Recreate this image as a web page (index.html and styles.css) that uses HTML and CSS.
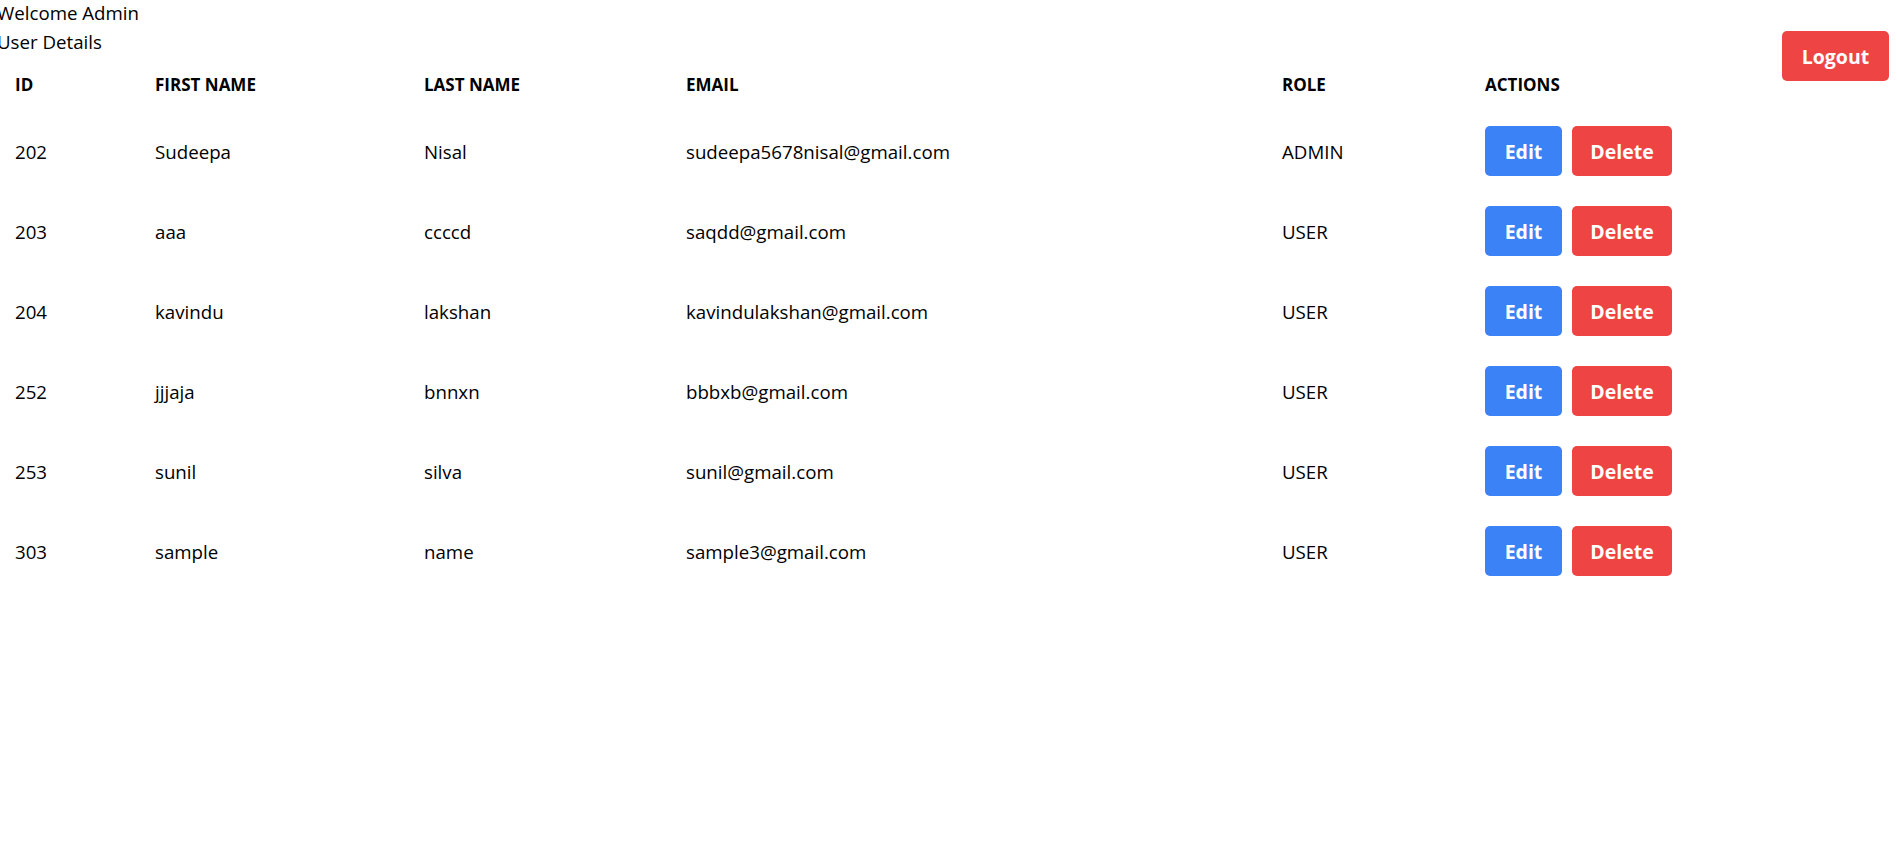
FILE: index.html
```html
<!DOCTYPE html>
<html lang="en">
<head>
<meta charset="utf-8">
<title>User Details</title>
<link rel="stylesheet" href="styles.css">
</head>
<body>
<div class="page">
  <main class="main">
    <div class="welcome">Welcome Admin</div>
    <div class="subtitle">User Details</div>
    <table class="users">
      <thead>
        <tr>
          <th class="c-id">ID</th>
          <th class="c-first">FIRST NAME</th>
          <th class="c-last">LAST NAME</th>
          <th class="c-email">EMAIL</th>
          <th class="c-role">ROLE</th>
          <th class="c-actions">ACTIONS</th>
        </tr>
      </thead>
      <tbody>
        <tr>
          <td>202</td><td>Sudeepa</td><td>Nisal</td><td>sudeepa5678nisal@gmail.com</td><td>ADMIN</td>
          <td><div class="actions"><button class="btn btn-edit">Edit</button><button class="btn btn-delete">Delete</button></div></td>
        </tr>
        <tr>
          <td>203</td><td>aaa</td><td>ccccd</td><td>saqdd@gmail.com</td><td>USER</td>
          <td><div class="actions"><button class="btn btn-edit">Edit</button><button class="btn btn-delete">Delete</button></div></td>
        </tr>
        <tr>
          <td>204</td><td>kavindu</td><td>lakshan</td><td>kavindulakshan@gmail.com</td><td>USER</td>
          <td><div class="actions"><button class="btn btn-edit">Edit</button><button class="btn btn-delete">Delete</button></div></td>
        </tr>
        <tr>
          <td>252</td><td>jjjaja</td><td>bnnxn</td><td>bbbxb@gmail.com</td><td>USER</td>
          <td><div class="actions"><button class="btn btn-edit">Edit</button><button class="btn btn-delete">Delete</button></div></td>
        </tr>
        <tr>
          <td>253</td><td>sunil</td><td>silva</td><td>sunil@gmail.com</td><td>USER</td>
          <td><div class="actions"><button class="btn btn-edit">Edit</button><button class="btn btn-delete">Delete</button></div></td>
        </tr>
        <tr>
          <td>303</td><td>sample</td><td>name</td><td>sample3@gmail.com</td><td>USER</td>
          <td><div class="actions"><button class="btn btn-edit">Edit</button><button class="btn btn-delete">Delete</button></div></td>
        </tr>
      </tbody>
    </table>
  </main>
  <button class="btn btn-logout">Logout</button>
</div>
</body>
</html>
```
FILE: styles.css
```css
html, body {
  margin: 0;
  padding: 0;
  background: #ffffff;
}

body {
  font-family: "Open Sans", "Noto Sans", "Liberation Sans", sans-serif;
  font-size: 18.7px;
  line-height: 29px;
  color: #000000;
}

.page {
  display: flex;
  justify-content: space-between;
  align-items: flex-start;
}

.main {
  display: flex;
  flex-direction: column;
}

.welcome,
.subtitle {
  margin-left: -3px;
}

.welcome {
  margin-top: -2px;
}

.users {
  margin-top: 2px;
  border-collapse: collapse;
  table-layout: fixed;
  width: 1686px;
}

.users th,
.users td {
  box-sizing: border-box;
  text-align: left;
  padding: 0 0 0 15px;
  vertical-align: middle;
}

.users th {
  font-weight: 700;
  font-size: 17px;
  height: 53px;
  text-transform: uppercase;
}

.users td {
  height: 80px;
  font-weight: 400;
}

.c-id { width: 140px; }
.c-first { width: 269px; }
.c-last { width: 262px; }
.c-email { width: 596px; }
.c-role { width: 203px; }
.c-actions { width: 216px; }

.actions {
  display: flex;
  gap: 10px;
}

.btn {
  border: none;
  border-radius: 5px;
  height: 50px;
  padding: 0;
  font-family: "Open Sans", "Noto Sans", "Liberation Sans", sans-serif;
  font-size: 19.5px;
  font-weight: 700;
  color: #ffffff;
  cursor: pointer;
}

.btn-edit {
  width: 77px;
  background: #3b82f6;
}

.btn-delete {
  width: 100px;
  background: #ef4444;
}

.btn-logout {
  width: 107px;
  margin-top: 31px;
  margin-right: 8px;
  background: #ef4444;
}
```
